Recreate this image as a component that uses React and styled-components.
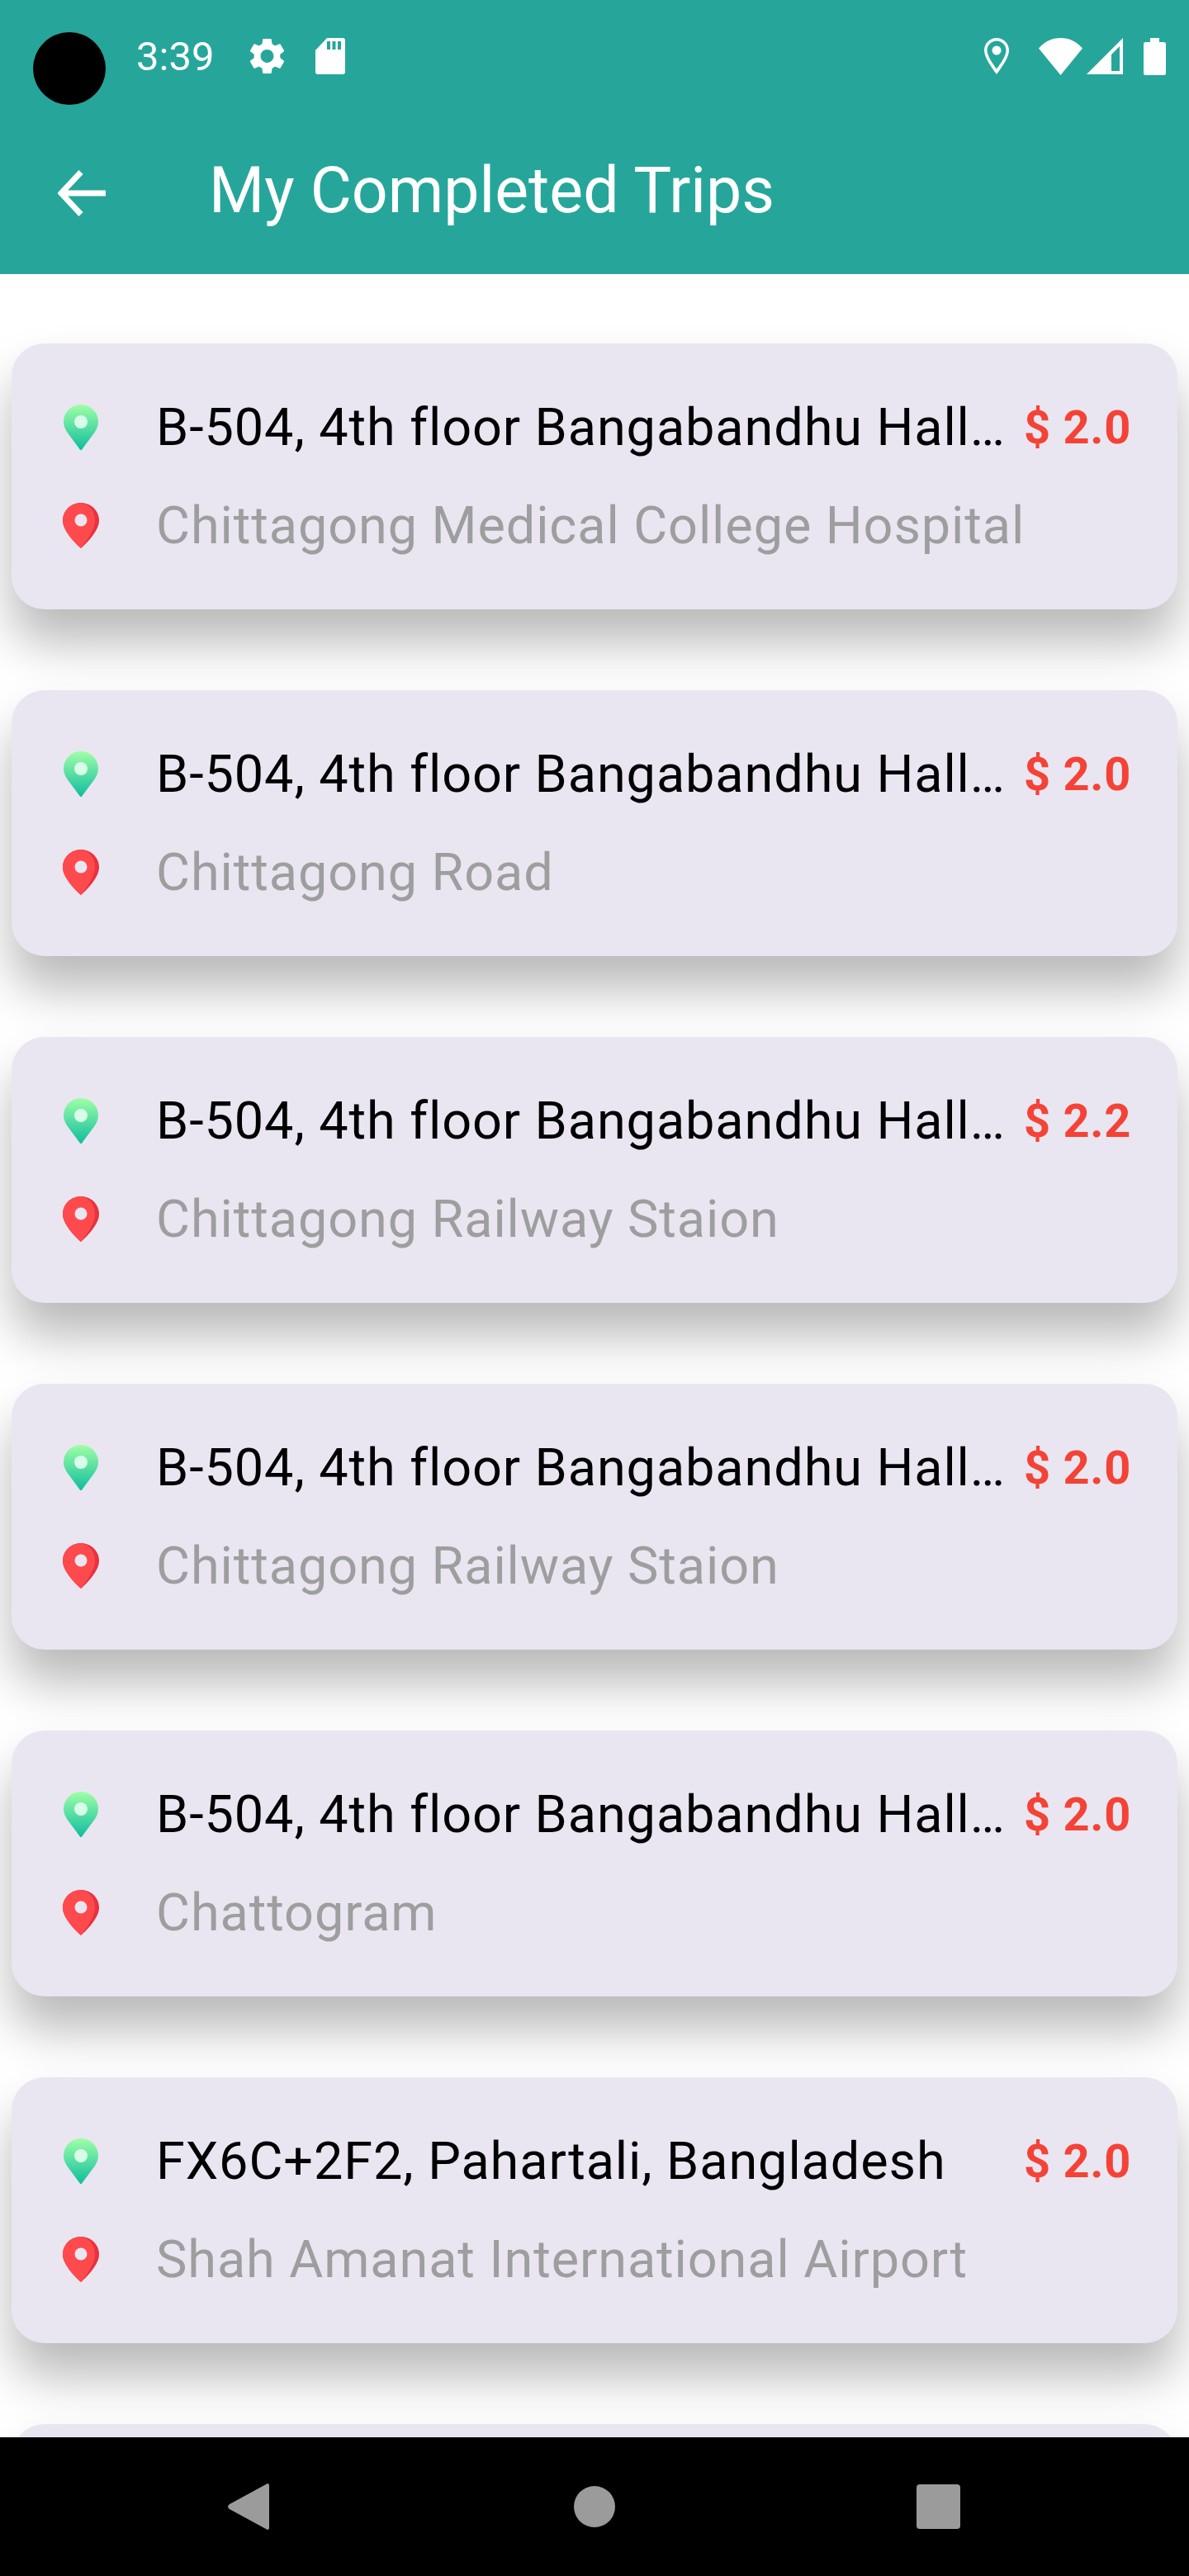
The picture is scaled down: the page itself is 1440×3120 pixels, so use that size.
import { useId } from "react";
import styled, { createGlobalStyle } from "styled-components";

const GlobalStyle = createGlobalStyle`
  html, body {
    margin: 0;
    padding: 0;
    background: #fff;
  }
  * {
    box-sizing: border-box;
  }
`;

const Page = styled.div`
  position: relative;
  width: 1440px;
  height: 3120px;
  display: flex;
  flex-direction: column;
  overflow: hidden;
  background: #fff;
  font-family: Roboto, "Liberation Sans", sans-serif;
`;

const Header = styled.header`
  position: relative;
  z-index: 1;
  height: 332px;
  flex: none;
  background: #26a69a;
  color: #fff;
`;

const StatusBar = styled.div`
  height: 136px;
  display: flex;
  align-items: center;
  padding: 0 28px 0 165px;
`;

const CameraHole = styled.div`
  position: absolute;
  left: 40px;
  top: 39px;
  width: 88px;
  height: 88px;
  border-radius: 50%;
  background: #000;
`;

const Time = styled.span`
  font-size: 49px;
  line-height: 1;
  font-weight: 400;
  width: 94px;
  white-space: nowrap;
`;

const StatusIcon = styled.svg`
  display: block;
  flex: none;
  fill: #fff;
  margin-left: ${(p) => p.$gap || 0}px;
`;

const Spacer = styled.div`
  flex: 1;
`;

const AppBar = styled.div`
  height: 196px;
  display: flex;
  align-items: center;
  padding-left: 70px;
`;

const BackIcon = styled.svg`
  display: block;
  flex: none;
  fill: none;
  stroke: #fff;
  stroke-width: 7;
`;

const Title = styled.h1`
  margin: 0 0 6px 125px;
  font-size: 77px;
  line-height: 1;
  font-weight: 400;
  white-space: nowrap;
`;

const TripList = styled.main`
  flex: 1;
  min-height: 0;
  overflow: hidden;
  display: flex;
  flex-direction: column;
  gap: 98px;
  padding: 84px 14px 0;
`;

const Card = styled.section`
  flex: none;
  height: 322px;
  padding: 42px 56px 42px 62px;
  border-radius: 40px;
  background: #e9e6f1;
  box-shadow: 0 40px 60px rgba(0, 0, 0, 0.28);
`;

const Row = styled.div`
  height: 119px;
  display: flex;
  align-items: center;
`;

const Pin = styled.svg`
  display: block;
  flex: none;
  width: 44px;
  height: 55px;
`;

const Place = styled.span`
  flex: 1;
  min-width: 0;
  margin-left: 69px;
  font-size: 63px;
  line-height: 74px;
  color: ${(p) => (p.$muted ? "#9e9e9e" : "#000")};
  letter-spacing: 0.9px;
  white-space: nowrap;
`;

const Fare = styled.span`
  flex: none;
  margin-left: 22px;
  font-size: 56px;
  line-height: 74px;
  font-weight: 700;
  letter-spacing: 0.7px;
  color: #f44336;
  white-space: nowrap;
`;

const NavBar = styled.nav`
  position: relative;
  height: 168px;
  flex: none;
  display: flex;
  align-items: center;
  padding-left: 276px;
  background: #000;
`;

const NavIcon = styled.svg`
  display: block;
  flex: none;
  fill: #9b9b9b;
  margin-left: ${(p) => p.$gap || 0}px;
`;

const hall = "B-504, 4th floor Bangabandhu Hall…";

const trips = [
  { id: 1, from: hall, to: "Chittagong Medical College Hospital", fare: "2.0" },
  { id: 2, from: hall, to: "Chittagong Road", fare: "2.0" },
  { id: 3, from: hall, to: "Chittagong Railway Staion", fare: "2.2" },
  { id: 4, from: hall, to: "Chittagong Railway Staion", fare: "2.0" },
  { id: 5, from: hall, to: "Chattogram", fare: "2.0" },
  { id: 6, from: "FX6C+2F2, Pahartali, Bangladesh", to: "Shah Amanat International Airport", fare: "2.0" },
];

function GreenPin() {
  const id = useId();
  return (
    <Pin viewBox="0 0 44 55">
      <defs>
        <linearGradient id={id} x1="0" y1="0" x2="0" y2="1">
          <stop offset="0" stopColor="#a0ffa6" />
          <stop offset="1" stopColor="#0cbc9e" />
        </linearGradient>
      </defs>
      <path
        d="M22 0C33.5 0 43 9.2 43 21c0 5-2 9-5 13.500L22 56 6 34.500C3 30 1 26 1 21 1 9.200 10.500 0 22 0z"
        fill={`url(#${id})`}
      />
      <circle cx="22" cy="21" r="8" fill="#d8fcea" />
    </Pin>
  );
}

function RedPin() {
  return (
    <Pin viewBox="0 0 44 55">
      <path
        d="M22 0C34 0 44 9.500 44 21.500 44 33 31 47 22 55 13 47 0 33 0 21.500 0 9.500 10 0 22 0z"
        fill="#e8323f"
      />
      <path
        d="M22 0C31 1 39 9 39 21.500 39 33 28 47 22 55 13 47 0 33 0 21.500 0 9.500 10 0 22 0z"
        fill="#ff4a4d"
      />
      <circle cx="22" cy="21" r="7.500" fill="#e9e6f1" />
    </Pin>
  );
}

function App() {
  return (
    <Page>
      <GlobalStyle />
      <Header>
        <StatusBar>
          <CameraHole />
          <Time>3:39</Time>
          <StatusIcon $gap={43} width="43" height="44" viewBox="2.600 2 18.800 20">
            <path d="M19.140 12.940c.04-.3.06-.61.06-.94 0-.32-.02-.64-.07-.94l2.030-1.580c.18-.14.23-.41.12-.61l-1.920-3.320c-.12-.22-.37-.29-.59-.22l-2.390.96c-.5-.38-1.030-.7-1.620-.94l-.36-2.540c-.04-.24-.24-.41-.48-.41h-3.840c-.24 0-.43.17-.47.41l-.36 2.540c-.59.24-1.130.57-1.620.94l-2.390-.96c-.22-.08-.47 0-.59.22L2.740 8.870c-.12.21-.08.47.12.61l2.030 1.580c-.05.3-.09.63-.09.94s.02.64.07.94l-2.030 1.580c-.18.14-.23.41-.12.61l1.920 3.320c.12.22.37.29.59.22l2.390-.96c.5.38 1.030.7 1.620.94l.36 2.540c.05.24.24.41.48.41h3.840c.24 0 .44-.17.47-.41l.36-2.540c.59-.24 1.130-.56 1.620-.94l2.390.96c.22.08.47 0 .59-.22l1.920-3.320c.12-.22.07-.47-.12-.61l-2.010-1.580zM12 15.600c-1.980 0-3.600-1.620-3.600-3.600s1.620-3.600 3.600-3.600 3.600 1.620 3.600 3.600-1.620 3.600-3.600 3.600z" />
          </StatusIcon>
          <StatusIcon $gap={37} width="36" height="44" viewBox="0 0 36 44">
            <path
              fillRule="evenodd"
              d="M14 0h19a3 3 0 0 1 3 3v38a3 3 0 0 1-3 3H3a3 3 0 0 1-3-3V15zM14 4v10h4V4zM20.500 4v10h4V4zM27 4v10h4V4z"
            />
          </StatusIcon>
          <Spacer />
          <StatusIcon width="30" height="44" viewBox="0 0 30 44">
            <path
              fillRule="evenodd"
              d="M15 0C23.300 0 30 6.700 30 15c0 8-7 18-15 29C7 33 0 23 0 15 0 6.700 6.700 0 15 0zM15 3.500C8.700 3.500 3.500 8.700 3.500 15c0 5.500 4.800 13.500 11.500 22.500C21.700 28.500 26.500 20.500 26.500 15 26.500 8.700 21.300 3.500 15 3.500z"
            />
            <circle cx="15" cy="15" r="5.500" />
          </StatusIcon>
          <StatusIcon $gap={36} width="53" height="45" viewBox="0 0 53 45">
            <path d="M0 12.500C7 4.500 16 0 26.500 0S46 4.500 53 12.500L26.500 45z" />
          </StatusIcon>
          <StatusIcon $gap={5} width="44" height="44" viewBox="0 0 44 44">
            <path fillRule="evenodd" d="M44 0v44H0zM30 20v20h10V10z" />
          </StatusIcon>
          <StatusIcon $gap={25} width="27" height="45" viewBox="0 0 27 45">
            <path d="M8 0h11v5h5.500a2.500 2.500 0 0 1 2.500 2.500V42.500a2.500 2.500 0 0 1-2.500 2.500H2.500A2.500 2.500 0 0 1 0 42.500V7.500A2.500 2.500 0 0 1 2.500 5H8z" />
          </StatusIcon>
        </StatusBar>
        <AppBar>
          <BackIcon width="58" height="56" viewBox="0 0 58 56">
            <path d="M58 28H5M28 2.500L4 28l24 25.500" />
          </BackIcon>
          <Title>My Completed Trips</Title>
        </AppBar>
      </Header>

      <TripList>
        {trips.map((trip) => (
          <Card key={trip.id}>
            <Row>
              <GreenPin />
              <Place>{trip.from}</Place>
              <Fare>$ {trip.fare}</Fare>
            </Row>
            <Row>
              <RedPin />
              <Place $muted>{trip.to}</Place>
            </Row>
          </Card>
        ))}
        <Card />
      </TripList>

      <NavBar>
        <NavIcon width="50" height="56" viewBox="0 0 50 56">
          <path d="M47 0.500c1.500-1 3 0 3 2v51c0 2-1.500 3-3 2L2 31c-2.500-1.500-2.500-4.500 0-6z" />
        </NavIcon>
        <NavIcon $gap={369} width="50" height="50" viewBox="0 0 50 50">
          <circle cx="25" cy="25" r="25" />
        </NavIcon>
        <NavIcon $gap={365} width="53" height="54" viewBox="0 0 53 54">
          <rect width="53" height="54" rx="4" />
        </NavIcon>
      </NavBar>
    </Page>
  );
}

export default App;
